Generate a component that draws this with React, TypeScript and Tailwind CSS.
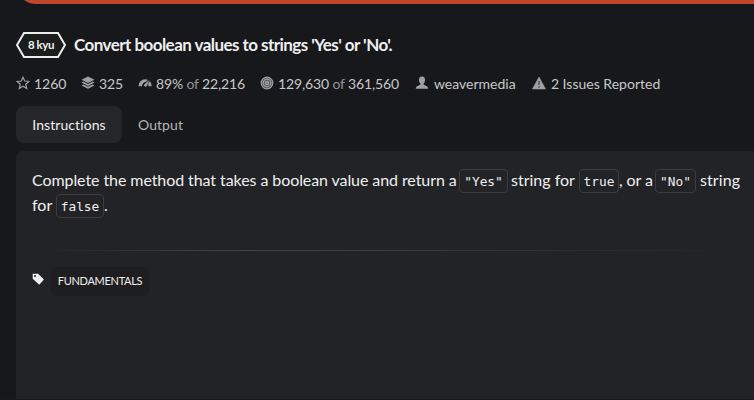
import React from 'react';

const Star = () => (
  <svg width="14" height="14" viewBox="0 0 14 14" fill="none" stroke="#a0a0a1" strokeWidth="1.2">
    <path d="M7 1.2 8.7 5l4.2.4-3.2 2.8 1 4.2L7 10.2l-3.7 2.2 1-4.2L1.1 5.4 5.3 5Z" />
  </svg>
);
const Layers = () => (
  <svg width="14" height="14" viewBox="0 0 14 14" fill="#a0a0a1">
    <path d="M7 .6 13.500 3.800 7 7 .5 3.800Z" />
    <path d="M.5 6.500 2.300 5.500 7 7.900l4.700-2.400 1.800 1L7 9.900Z" />
    <path d="M.5 9.400 2.300 8.400 7 10.800l4.700-2.400 1.800 1L7 12.800Z" />
  </svg>
);
const Gauge = () => (
  <svg width="14" height="14" viewBox="0 0 14 14" fill="#a0a0a1">
    <path d="M.5 10.300C.8 6 3.500 3.500 7.200 3.300L9.800 3.700 7.900 6C5.600 6 4.300 7.600 4 10.300Z" />
    <path d="M11.500 3.800 8.900 10a1.600 1.600 0 0 1-2.900-1.200Z" />
    <path d="M11.900 5.200c1.100 1.100 1.600 2.800 1.700 5.100h-3c0-1-.2-1.800-.5-2.400Z" />
  </svg>
);
const Target = () => (
  <svg width="14" height="14" viewBox="0 0 14 14" fill="none" stroke="#a0a0a1">
    <circle cx="7" cy="7" r="5.8" fill="#55565a" stroke="#a0a0a1" strokeWidth="1.200" />
    <circle cx="7" cy="7" r="3.800" strokeWidth="1.200" />
    <circle cx="7" cy="7" r="1.500" strokeWidth="1.500" />
  </svg>
);
const User = () => (
  <svg width="14" height="14" viewBox="0 0 14 14" fill="#a0a0a1">
    <path d="M7 .5c2.200 0 3.200 1.500 3 3.700-.1 1.800-.7 2.600-1.400 3.300v1.200c1.600.8 4.600 1.300 4.600 4.100H.8c0-2.800 3-3.300 4.600-4.100V7.500C4.700 6.800 4.100 6 4 4.200 3.800 2 4.800.5 7 .5Z" />
  </svg>
);
const Warning = () => (
  <svg width="14" height="14" viewBox="0 0 14 14">
    <path d="M7 1 13.600 13H.4Z" fill="#a0a0a1" stroke="#a0a0a1" strokeWidth=".5" strokeLinejoin="round" />
    <path d="M7 5v4M7 10.300v1.400" stroke="#48494c" strokeWidth="1.300" />
  </svg>
);
const Tag = () => (
  <svg width="12" height="12" viewBox="0 0 12 12" fill="#efefef">
    <path fillRule="evenodd" d="M.7.7h5.300l5.500 5.300q.5.5 0 1L7.700 11.200q-.5.5-1 0L.7 5.700ZM3 2a1 1 0 1 0 0 2 1 1 0 0 0 0-2Z" />
  </svg>
);

type StatProps = { icon: React.ReactNode; children: React.ReactNode; className: string };
const Stat = ({ icon, children, className }: StatProps) => (
  <div className={`flex shrink-0 items-center whitespace-nowrap ${className}`}>
    <span className="mr-1 -mt-[2px] shrink-0">{icon}</span>
    <span>{children}</span>
  </div>
);
const Of = () => <span className="text-[#929293]">of</span>;
const Code = ({ children, className }: { children: React.ReactNode; className: string }) => (
  <code className={`inline-flex h-6 shrink-0 items-center justify-center rounded-[4px] border border-[#3b3c3f] pt-[3px] font-['DejaVu_Sans_Mono','Liberation_Mono',monospace] text-[12.8px] leading-none ${className}`}>{children}</code>
);

export default function App() {
  return (
    <div className="flex h-[400px] w-[754px] flex-col overflow-hidden bg-[#17181b] font-['Lato',sans-serif] text-[#efefef]">
      <div className="ml-4 h-1 shrink-0 overflow-hidden">
        <div className="-mt-4 h-5 w-[770px] rounded-bl-[20px] bg-[#bf452b]" />
      </div>
      <div className="mt-7 ml-4 flex h-[26px] shrink-0 items-center">
        <div className="grid h-[26px] w-[50px] place-items-center">
          <svg className="col-start-1 row-start-1" width="50" height="26" viewBox="0 0 50 26" fill="#1a1d1c" stroke="#ececec" strokeWidth="2">
            <path d="M8 1H42L49 13 42 25H8L1 13Z" />
          </svg>
          <span className="col-start-1 row-start-1 text-[11.500px] font-bold tracking-[-0.4px]">8 kyu</span>
        </div>
        <h1 className="ml-2 whitespace-nowrap text-[17px] font-bold tracking-[-0.55px]">Convert boolean values to strings 'Yes' or 'No'.</h1>
      </div>
      <div className="mt-[16px] ml-4 flex h-5 shrink-0 items-center text-sm text-[#c8c8c9]">
        <Stat className="w-[65px]" icon={<Star />}>1260</Stat>
        <Stat className="w-[57px] tracking-[-0.1px]" icon={<Layers />}>325</Stat>
        <Stat className="w-[122px] tracking-[-0.15px]" icon={<Gauge />}>89% <Of /> 22,216</Stat>
        <Stat className="w-[155px] tracking-[-0.13px]" icon={<Target />}>129,630 <Of /> 361,560</Stat>
        <Stat className="w-[117px] tracking-[0.01px]" icon={<User />}>&#8202;weavermedia</Stat>
        <Stat className="w-[140px] tracking-[0.01px]" icon={<Warning />}>&#8202;2 Issues Reported</Stat>
      </div>
      <div className="mt-3 ml-4 flex h-[37px] shrink-0 text-sm tracking-[0.07px]">
        <div className="flex w-[106px] items-center justify-center rounded-lg bg-[#252629]">Instructions</div>
        <div className="flex w-[77px] items-center justify-center text-[#b5b5b6]">Output</div>
      </div>
      <div className="mt-2 ml-4 flex h-[248px] shrink-0 flex-col rounded-tl-lg bg-[#222326] px-4 pt-[17px]">
        <div className="text-base leading-[23px]">
          <div className="flex h-[25px] items-center whitespace-nowrap">
            <span className="w-[427px] shrink-0 pb-[2px] tracking-[-0.08px]">Complete the method that takes a boolean value and return a</span>
            <Code className="w-[49px]">"Yes"</Code>
            <span className="ml-[3px] w-[68px] shrink-0 pb-[2px]">string for</span>
            <Code className="w-10">true</Code>
            <span className="w-9 shrink-0 pb-[2px] tracking-[-0.1px]">, or a</span>
            <Code className="w-[41px]">"No"</Code>
            <span className="ml-1 pb-[2px] tracking-[0.1px]">string</span>
          </div>
          <div className="flex h-[25px] items-center">
            <span className="w-6 pb-[2px]">for</span>
            <Code className="w-12">false</Code>
            <span className="pb-[2px]">.</span>
          </div>
        </div>
        <div className="mt-8 h-px shrink-0 bg-linear-to-r from-transparent from-1% via-[#434447] via-30% to-transparent" />
        <div className="mt-4 flex items-start">
          <span className="mt-[6px]"><Tag /></span>
          <span className="ml-[7px] flex h-[29px] w-[98px] items-center justify-center rounded-md bg-[#1e1e21] text-[11px] tracking-[-0.3px]">FUNDAMENTALS</span>
        </div>
      </div>
      <div className="h-px shrink-0 bg-[#1b191b]" />
    </div>
  );
}
